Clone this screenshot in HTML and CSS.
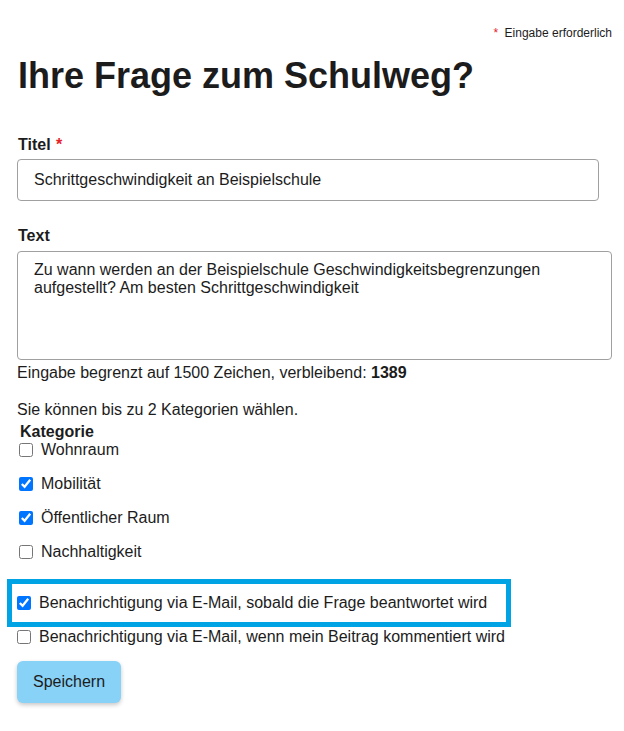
FILE: index.html
```html
<!DOCTYPE html>
<html lang="de">
<head>
<meta charset="utf-8">
<title>Ihre Frage zum Schulweg?</title>
<link rel="stylesheet" href="styles.css">
</head>
<body>
<main class="page">
  <p class="required-note"><span class="star">*</span> Eingabe erforderlich</p>
  <h1 class="title">Ihre Frage zum Schulweg?</h1>
  <form class="form">
    <label class="field-label" for="titel">Titel <span class="star">*</span></label>
    <input class="text-input" id="titel" type="text" value="Schrittgeschwindigkeit an Beispielschule">

    <label class="field-label label-text" for="text">Text</label>
    <textarea class="text-area" id="text">Zu wann werden an der Beispielschule Geschwindigkeitsbegrenzungen aufgestellt? Am besten Schrittgeschwindigkeit</textarea>
    <p class="hint">Eingabe begrenzt auf 1500 Zeichen, verbleibend: <b>1389</b></p>

    <p class="info">Sie können bis zu 2 Kategorien wählen.</p>
    <fieldset class="categories">
      <legend class="legend">Kategorie</legend>
      <label class="check"><input type="checkbox"><span>Wohnraum</span></label>
      <label class="check"><input type="checkbox" checked><span>Mobilität</span></label>
      <label class="check"><input type="checkbox" checked><span>Öffentlicher Raum</span></label>
      <label class="check"><input type="checkbox"><span>Nachhaltigkeit</span></label>
    </fieldset>

    <div class="highlight">
      <label class="check notify"><input type="checkbox" checked><span>Benachrichtigung via E-Mail, sobald die Frage beantwortet wird</span></label>
    </div>
    <label class="check notify notify-plain"><input type="checkbox"><span>Benachrichtigung via E-Mail, wenn mein Beitrag kommentiert wird</span></label>

    <button class="save" type="button">Speichern</button>
  </form>
</main>
</body>
</html>
```
FILE: styles.css
```css
* { box-sizing: border-box; }

body {
  margin: 0;
  background: #ffffff;
  color: #1c1c1c;
  font-family: "Liberation Sans", Arial, sans-serif;
  font-size: 16px;
  line-height: 18px;
}

.page {
  padding: 26px 12px 30px 17px;
}

.required-note {
  margin: 0;
  text-align: right;
  font-size: 12px;
  line-height: 14px;
}

.star {
  color: #e8202a;
  margin-right: 3px;
}

.title {
  margin: 15px 0 0 1px;
  font-size: 36px;
  line-height: 42px;
  font-weight: bold;
  color: #1c1c1c;
}

.form {
  display: flex;
  flex-direction: column;
  align-items: flex-start;
}

.field-label {
  display: block;
  margin: 39px 0 5px 1px;
  font-weight: bold;
}

.field-label .star { margin-left: 1px; }

.label-text { margin-top: 26px; margin-bottom: 6px; }

.text-input {
  width: 582px;
  height: 42px;
  margin: 0;
  padding: 0 16px;
  border: 1px solid #a0a0a0;
  border-radius: 4px;
  font: inherit;
  color: #1c1c1c;
  background: #fff;
}

.text-area {
  display: block;
  width: 595px;
  height: 109px;
  margin: 0;
  padding: 9px 16px;
  border: 1px solid #a0a0a0;
  border-radius: 4px;
  font: inherit;
  line-height: 18px;
  color: #1c1c1c;
  resize: none;
  background: #fff;
}

.hint {
  margin: 4px 0 0 0;
}

.info {
  margin: 19px 0 0 0;
}

.categories {
  margin: 4px 0 0 0;
  padding: 0 0 0 2px;
  border: 0;
  display: flex;
  flex-direction: column;
  gap: 16px;
}

.legend {
  padding: 0 0 0 1px;
  font-weight: bold;
}

.check {
  display: flex;
  align-items: center;
  height: 18px;
}

.check input {
  width: 14px;
  height: 14px;
  margin: 0 8px 0 0;
}

.highlight {
  margin: 18px 0 0 -10px;
  width: 504px;
  padding: 10px 5px;
  border: 5px solid #00a4e4;
}

.notify input { margin-right: 8px; }

.notify-plain { margin-top: 1px; }

.save {
  margin-top: 15px;
  height: 42px;
  padding: 0 16px;
  border: 0;
  border-radius: 6px;
  background: #88d1f7;
  color: #1c1c1c;
  font: inherit;
  box-shadow: 0 2px 4px rgba(0, 0, 0, 0.22);
}
```
